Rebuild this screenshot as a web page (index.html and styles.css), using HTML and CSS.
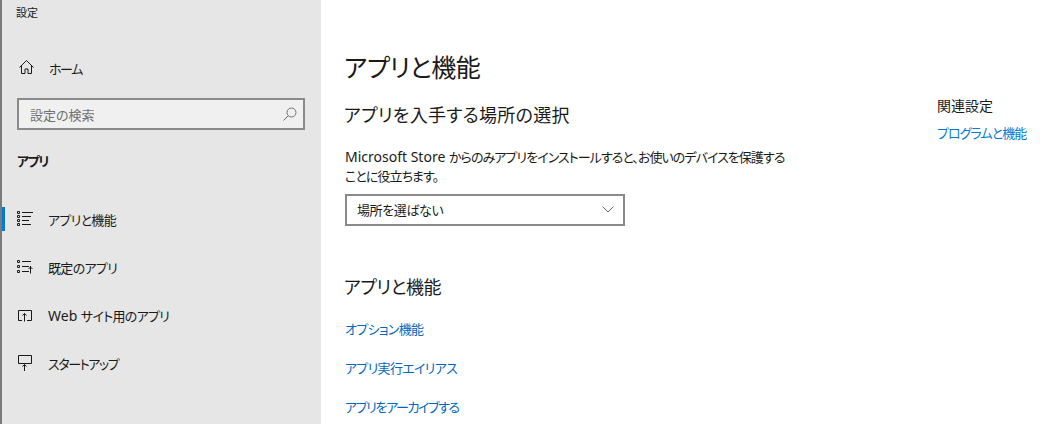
FILE: index.html
```html
<!DOCTYPE html>
<html lang="ja">

<head>
    <meta charset="UTF-8">
    <title>設定</title>
    <link rel="stylesheet" href="styles.css">
</head>

<body>
    <div class="sidebar">
        <div class="window-title">設定</div>
        <div class="nav-home">
            <svg width="16" height="16" viewBox="0 0 16 16"><path d="M.5 7.500 7.500.5l7 7M2.500 5.500v8H6V9h3v4.500h3.500v-8"/></svg>
            <span class="label ja-tight">ホーム</span>
        </div>
        <div class="search">
            <span class="search-text">設定の検索</span>
            <svg class="search-icon" width="14" height="14" viewBox="0 0 14 14"><circle cx="8.500" cy="5.500" r="4.500"/><path d="M5.200 8.800.5 13.500"/></svg>
        </div>
        <div class="section-title ja-tight">アプリ</div>
        <div class="nav-list">
            <div class="nav-item active">
                <svg width="16" height="16" viewBox="0 0 16 16"><path d="M.5.500h2v2h-2zM.5 4.500h2v2h-2zM.5 8.500h2v2h-2zM.5 12.500h2v2h-2zM5 1.500h11M5 5.500h9M5 9.500h7M5 13.500h9"/></svg>
                <span class="label ja">アプリと機能</span>
            </div>
            <div class="nav-item">
                <svg width="16" height="16" viewBox="0 0 16 16"><path d="M.5 1.500h2v2h-2zM.5 6.500h2v2h-2zM.5 11.500h2v2h-2zM5 2.500h9M5 7.500h7M5 12.500h7M13.500 14.500V7M11.500 10l2-2 2 2"/></svg>
                <span class="label ja">既定のアプリ</span>
            </div>
            <div class="nav-item">
                <svg width="16" height="16" viewBox="0 0 16 16"><path d="M5 13.500H1.500v-10h13v10H10M7.500 14.500V6.500M5.500 8.500l2-2 2 2"/></svg>
                <span class="label">Web <span class="ja">サイト用のアプリ</span></span>
            </div>
            <div class="nav-item">
                <svg width="16" height="16" viewBox="0 0 16 16"><path d="M1.500.5h13v8h-13zM7.500 16V9.500M5.500 11.500l2-2 2 2"/></svg>
                <span class="label ja-tight">スタートアップ</span>
            </div>
        </div>
    </div>

    <div class="main">
        <div class="content">
            <h1>アプリと機能</h1>
            <h2 class="first">アプリを入手する場所の選択</h2>
            <div class="desc">
                <div>Microsoft Store <span class="ja">からのみアプリをインストールすると、お使いのデバイスを保護する</span></div>
                <div class="ja">ことに役立ちます。</div>
            </div>
            <div class="dropdown">
                <span class="dropdown-text">場所を選ばない</span>
                <svg width="12" height="7" viewBox="0 0 12 7"><path d="M.5.500 6 6l5.500-5.500"/></svg>
            </div>
            <h2 class="second">アプリと機能</h2>
            <a class="link ja">オプション機能</a>
            <a class="link ja">アプリ実行エイリアス</a>
            <a class="link ja-tight">アプリをアーカイブする</a>
        </div>
        <div class="related">
            <div class="related-title">関連設定</div>
            <a class="related-link">プログラムと機能</a>
        </div>
    </div>
</body>

</html>
```

FILE: styles.css
```css
html, body {
    height: 100%;
}

body {
    margin: 0;
    display: flex;
    height: 424px;
    overflow: hidden;
    background-color: #ffffff;
    color: #1a1a1a;
    font-family: "Noto Sans", "Noto Sans CJK JP", sans-serif;
    font-size: 14px;
    font-feature-settings: "palt";
}

svg {
    flex: none;
    fill: none;
    stroke: #1a1a1a;
    stroke-width: 1;
}

/* kana is narrower in the original font, so squeeze it */
.ja {
    font-size: 13px;
    letter-spacing: -0.7px;
}

.ja-tight {
    font-size: 13px;
    letter-spacing: -1.4px;
}

.sidebar {
    width: 319px;
    flex: none;
    background-color: #e6e6e6;
    border-left: 2px solid #7a7a7a;
}

.window-title {
    font-size: 11px;
    line-height: 16px;
    padding: 5px 0 0 14px;
}

.nav-home {
    display: flex;
    align-items: center;
    margin-top: 37px;
    padding-left: 17px;
    height: 20px;
}

.nav-home .label {
    margin-left: 14px;
}

.search {
    display: flex;
    align-items: center;
    justify-content: space-between;
    box-sizing: border-box;
    width: 288px;
    height: 32px;
    margin: 20px 0 0 15px;
    padding: 0 6px 0 11px;
    background-color: #f0f0f0;
    border: 2px solid #8a8a8a;
    color: #707070;
}

.search-text {
    font-size: 13px;
}

.search-icon {
    stroke: #707070;
}

.section-title {
    margin: 19px 0 0 15px;
    font-weight: 700;
    line-height: 24px;
}

.nav-list {
    margin-top: 22px;
}

.nav-item {
    display: flex;
    align-items: center;
    height: 48px;
    padding-left: 15px;
    position: relative;
}

.nav-item .label {
    margin-left: 15px;
}

.nav-item.active::before {
    content: "";
    position: absolute;
    left: 0;
    top: 12px;
    width: 3px;
    height: 24px;
    background-color: #0078d7;
}

.main {
    flex: 1;
    display: flex;
    padding-left: 23px;
}

.content {
    width: 593px;
    flex: none;
}

h1 {
    margin: 46px 0 0;
    font-size: 25px;
    font-weight: 400;
    letter-spacing: -0.4px;
    line-height: 42px;
}

h2 {
    margin: 0;
    font-size: 18px;
    font-weight: 400;
    line-height: 28px;
}

h2.first {
    margin-top: 13px;
    letter-spacing: 0.25px;
}

h2.second {
    margin: 47px 0 -1px;
    letter-spacing: -0.5px;
}

.desc {
    margin: 18px 0 0 1px;
    line-height: 19px;
}

.desc .ja {
    letter-spacing: -0.95px;
}

.dropdown {
    display: flex;
    align-items: center;
    justify-content: space-between;
    box-sizing: border-box;
    width: 280px;
    height: 32px;
    margin: 8px 0 0 1px;
    padding: 0 9px 1px 10px;
    border: 2px solid #8a8a8a;
}

.dropdown-text {
    font-size: 13px;
    letter-spacing: -0.4px;
}

.dropdown svg {
    stroke: #666666;
}

.link {
    display: block;
    margin: 19px 0 0 1px;
    line-height: 20px;
    color: #0067c0;
}

.related {
    padding-top: 96px;
}

.related-title {
    line-height: 20px;
}

.related-link {
    display: block;
    margin-top: 7px;
    font-size: 13px;
    letter-spacing: -0.95px;
    line-height: 20px;
    color: #0078d7;
    white-space: nowrap;
}
```
